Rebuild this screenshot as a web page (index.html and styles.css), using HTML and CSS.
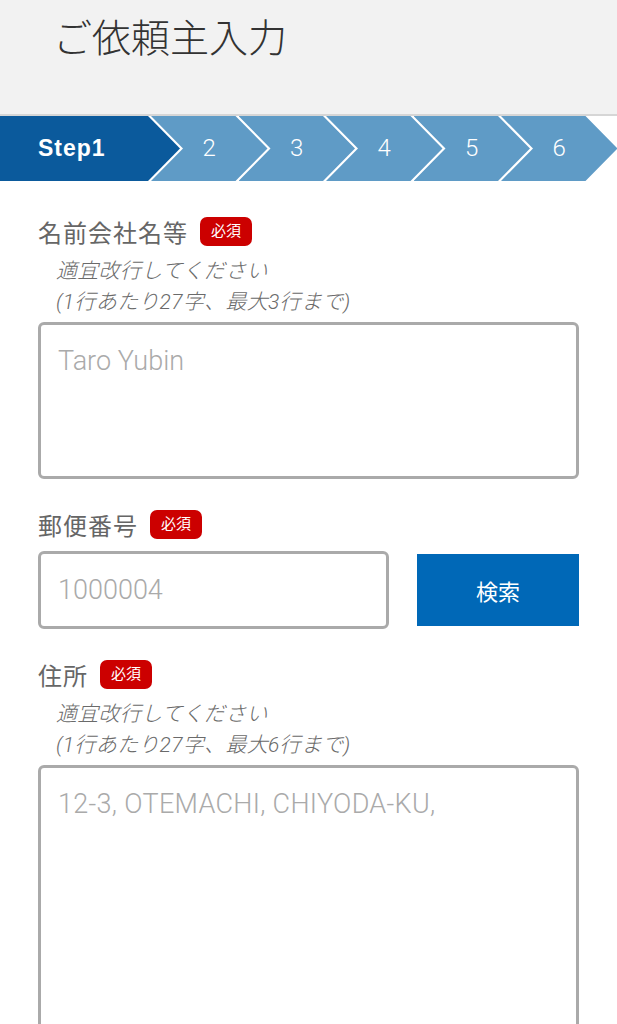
FILE: index.html
```html
<!DOCTYPE html>
<html lang="ja">
<head>
    <meta charset="UTF-8">
    <meta name="viewport" content="width=device-width, initial-scale=1.0">
    <title>ご依頼主入力</title>
    <link rel="stylesheet" href="styles.css">
</head>
<body>
    <header class="page-header">
        <h1>ご依頼主入力</h1>
    </header>

    <ol class="steps">
        <li class="step step-current">Step1</li>
        <li class="step">2</li>
        <li class="step">3</li>
        <li class="step">4</li>
        <li class="step">5</li>
        <li class="step">6</li>
    </ol>

    <form class="form">
        <div class="field">
            <div class="field-label">
                <span>名前会社名等</span>
                <span class="required">必須</span>
            </div>
            <p class="hint">適宜改行してください<br>(1行あたり27字、最大3行まで)</p>
            <textarea class="input textarea-name" placeholder="Taro Yubin"></textarea>
        </div>

        <div class="field">
            <div class="field-label">
                <span>郵便番号</span>
                <span class="required">必須</span>
            </div>
            <div class="zip-row">
                <input class="input input-zip" type="text" placeholder="1000004">
                <button class="search-button" type="button">検索</button>
            </div>
        </div>

        <div class="field">
            <div class="field-label">
                <span>住所</span>
                <span class="required">必須</span>
            </div>
            <p class="hint">適宜改行してください<br>(1行あたり27字、最大6行まで)</p>
            <textarea class="input textarea-address" placeholder="12-3, OTEMACHI, CHIYODA-KU,"></textarea>
        </div>
    </form>
</body>
</html>
```

FILE: styles.css
```css
* {
    margin: 0;
    padding: 0;
    box-sizing: border-box;
}

body {
    font-family: "Roboto", "Noto Sans CJK JP", sans-serif;
    background: #fff;
    color: #666;
    overflow: hidden;
}

.page-header {
    height: 116px;
    background: #f2f2f2;
    border-bottom: 2px solid #d6d6d6;
    padding: 13px 0 0 53px;
}

.page-header h1 {
    font-family: "Noto Sans CJK JP", sans-serif;
    font-size: 39px;
    font-weight: 300;
    line-height: 44px;
    color: #333;
}

/* step bar */
.steps {
    list-style: none;
    display: flex;
    height: 65px;
    overflow: hidden;
}

.step {
    flex: none;
    width: 116.5px;
    margin-left: -29px;
    background: #5f9bc6;
    color: #fff;
    font-size: 24px;
    font-weight: 300;
    line-height: 65px;
    text-align: center;
    clip-path: polygon(0 0, calc(100% - 32px) 0, 100% 50%, calc(100% - 32px) 100%, 0 100%, 32px 50%);
}

.step-current {
    width: 180px;
    margin-left: 0;
    background: #0b5a9c;
    font-family: "Liberation Sans", sans-serif;
    font-weight: 700;
    font-size: 23px;
    letter-spacing: 1px;
    text-align: left;
    padding-left: 38px;
    clip-path: polygon(0 0, calc(100% - 32px) 0, 100% 50%, calc(100% - 32px) 100%, 0 100%);
}

/* form */
.form {
    padding: 0 38px;
}

.field {
    margin-top: 30px;
}

.field:first-child {
    margin-top: 35px;
}

.field-label {
    display: flex;
    align-items: center;
    gap: 12px;
    height: 30px;
    font-size: 24px;
    letter-spacing: 1px;
    color: #666;
}

.required {
    display: inline-block;
    background: #cc0000;
    color: #fff;
    font-size: 15px;
    letter-spacing: 0;
    line-height: 29px;
    height: 29px;
    padding: 0 11px;
    border-radius: 7px;
}

.hint {
    margin: 10px 0 4px;
    padding-left: 18px;
    font-size: 21px;
    font-style: italic;
    font-weight: 300;
    line-height: 31px;
    letter-spacing: 0.3px;
    color: #6a6a6a;
}

.input {
    display: block;
    width: 100%;
    border: 3px solid #aaa;
    border-radius: 6px;
    background: #fff;
    font-family: "Roboto", "Noto Sans CJK JP", sans-serif;
    font-size: 27px;
    font-weight: 300;
    color: #333;
    padding: 22px 17px;
    resize: none;
    outline: none;
}

.input::placeholder {
    color: #aaa;
}

.textarea-name {
    height: 157px;
    padding-top: 19px;
    line-height: 34px;
}

.textarea-address {
    height: 300px;
    padding-top: 19px;
    line-height: 34px;
    letter-spacing: 0.3px;
}

.zip-row {
    display: flex;
    align-items: center;
    justify-content: space-between;
    margin-top: 12px;
}

.input-zip {
    width: 351px;
    height: 78px;
    padding: 0 17px;
}

.search-button {
    width: 162px;
    height: 72px;
    border: none;
    background: #0068b7;
    color: #fff;
    font-family: "Roboto", "Noto Sans CJK JP", sans-serif;
    font-size: 22px;
    cursor: pointer;
}
```
